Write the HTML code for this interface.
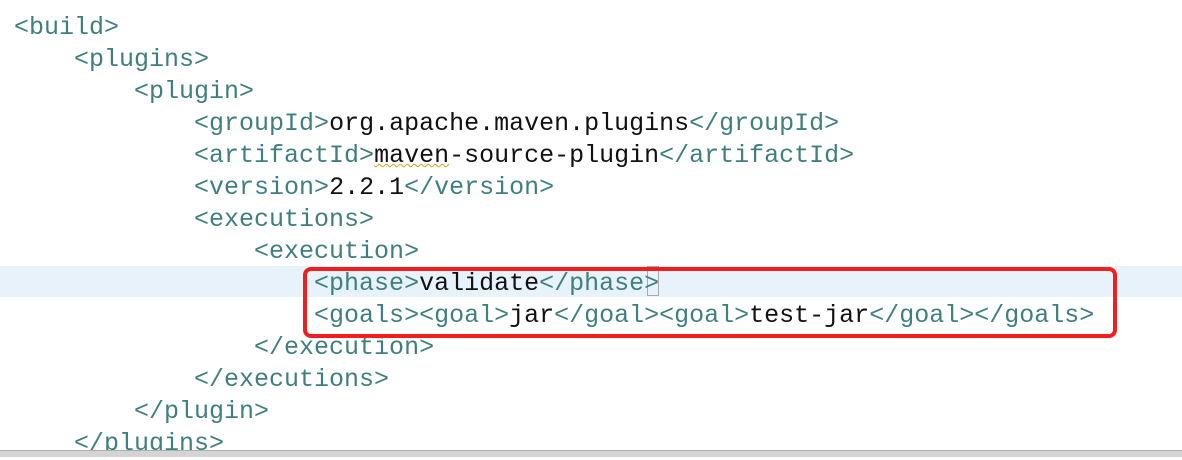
<!DOCTYPE html><html><head><style>
body{margin:0;width:1182px;height:456px;overflow:hidden;background:#fff;position:relative}
.hl{position:absolute;left:0;top:266px;width:1182px;height:31px;background:#e8f2fb}
pre{position:absolute;left:14px;top:12px;margin:0;font-family:"Liberation Mono",monospace;font-size:25px;line-height:32px;color:#3f7f7f}
b{font-weight:normal;color:#111}
.box{position:absolute;left:303px;top:267px;width:806px;height:63px;border:4px solid #f01e1e;border-radius:8px}
.bar{position:absolute;left:0;top:450px;width:1182px;height:6px;background:#d4d4d4;border-top:1px solid #b0b0b0}
.sq{position:absolute;left:647px;top:266px;width:10px;height:28px;border:1px solid #aaa}
u{text-decoration:underline wavy #d8a020;text-decoration-thickness:1px}
</style></head><body>
<div class="hl"></div>
<div class="sq"></div>
<pre>&lt;build&gt;
    &lt;plugins&gt;
        &lt;plugin&gt;
            &lt;groupId&gt;<b>org.apache.maven.plugins</b>&lt;/groupId&gt;
            &lt;artifactId&gt;<b><u>maven</u>-source-plugin</b>&lt;/artifactId&gt;
            &lt;version&gt;<b>2.2.1</b>&lt;/version&gt;
            &lt;executions&gt;
                &lt;execution&gt;
                    &lt;phase&gt;<b>validate</b>&lt;/phase&gt;
                    &lt;goals&gt;&lt;goal&gt;<b>jar</b>&lt;/goal&gt;&lt;goal&gt;<b>test-jar</b>&lt;/goal&gt;&lt;/goals&gt;
                &lt;/execution&gt;
            &lt;/executions&gt;
        &lt;/plugin&gt;
    &lt;/plugins&gt;</pre>
<div class="box"></div>
<div class="bar"></div>
</body></html>
